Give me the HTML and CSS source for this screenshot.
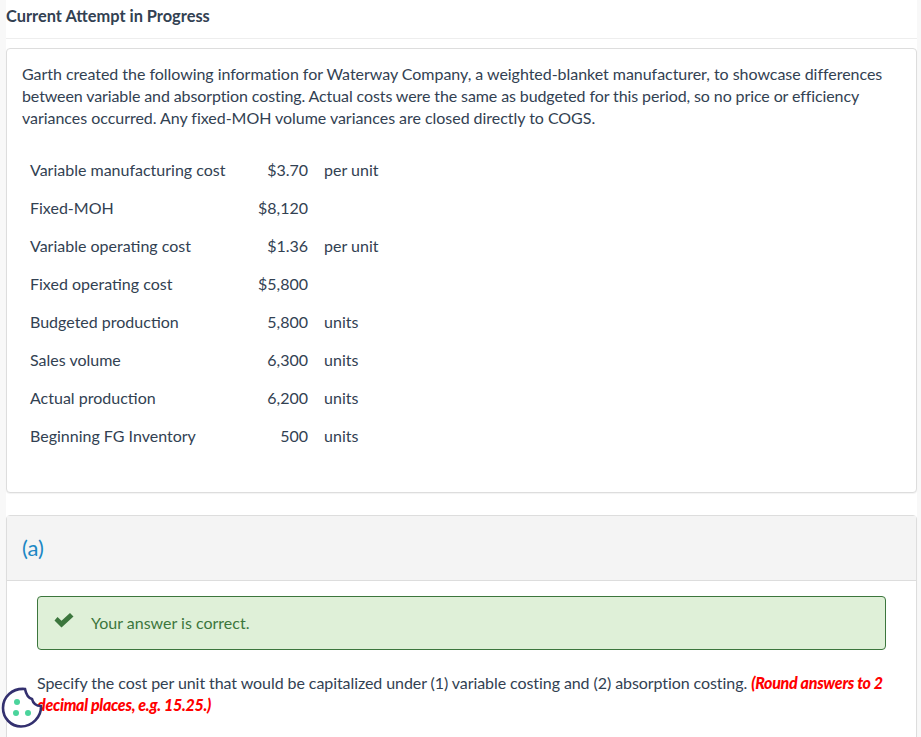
FILE: index.html
```html
<!DOCTYPE html>
<html lang="en">
<head>
<meta charset="utf-8">
<title>Current Attempt in Progress</title>
<link rel="stylesheet" href="styles.css">
</head>
<body>
<main class="page">
  <h1 class="title">Current Attempt in Progress</h1>
  <section class="card intro">
    <p class="lead">Garth created the following information for Waterway Company, a weighted-blanket manufacturer, to showcase differences <span class="tight">between variable and absorption costing. Actual costs were the same as budgeted for this period, so no price or efficiency</span> variances occurred. Any fixed-MOH volume variances are closed directly to COGS.</p>
    <table class="data">
      <tbody>
        <tr><td class="label">Variable manufacturing cost</td><td class="value">$3.70</td><td class="unit">per unit</td></tr>
        <tr><td class="label">Fixed-MOH</td><td class="value">$8,120</td><td class="unit"></td></tr>
        <tr><td class="label">Variable operating cost</td><td class="value">$1.36</td><td class="unit">per unit</td></tr>
        <tr><td class="label">Fixed operating cost</td><td class="value">$5,800</td><td class="unit"></td></tr>
        <tr><td class="label">Budgeted production</td><td class="value">5,800</td><td class="unit">units</td></tr>
        <tr><td class="label">Sales volume</td><td class="value">6,300</td><td class="unit">units</td></tr>
        <tr><td class="label">Actual production</td><td class="value">6,200</td><td class="unit">units</td></tr>
        <tr><td class="label">Beginning FG Inventory</td><td class="value">500</td><td class="unit">units</td></tr>
      </tbody>
    </table>
  </section>
  <section class="card part">
    <header class="part-head">(a)</header>
    <div class="part-body">
      <div class="notice">
        <svg class="check" viewBox="0 0 20 16" width="20" height="16" aria-hidden="true"><path d="M.5 8.500 3.500 5l4 3.800L16 1l3.500 3.500L7.500 15.500z"/></svg>
        <span class="notice-text">Your answer is correct.</span>
      </div>
      <p class="question">Specify the cost per unit that would be capitalized under (1) variable costing and (2) absorption costing. <strong class="hint">(Round answers to 2 decimal places, e.g. 15.25.)</strong></p>
    </div>
  </section>
</main>
<button class="cookie" type="button" aria-label="Cookie settings">
  <svg viewBox="0 0 42 42" width="42" height="42" aria-hidden="true">
    <path class="cookie-shape" d="M24 3C25 8 27 12 31 13 32 17 35 20 40 20 40.500 31 31 40.500 20 40.500 10 40.500 2 32 2 22 2 11 11 2 24 3z"/>
    <circle class="dot" cx="16" cy="16" r="3"/>
    <circle class="dot" cx="15" cy="27" r="3"/>
    <circle class="dot" cx="27" cy="27" r="3"/>
  </svg>
</button>
</body>
</html>
```
FILE: styles.css
```css
html, body {
  margin: 0;
  padding: 0;
  height: 737px;
  overflow: hidden;
  background: #f8f8f8;
}
body {
  font-family: Lato, "Liberation Sans", sans-serif;
  font-size: 16px;
  line-height: 22px;
  color: #324152;
}
.page {
  margin: 0 4px 0 6px;
  height: 737px;
  background: #fff;
}
.title {
  margin: 0;
  padding: 5px 0 12px;
  font-size: 16.4px;
  line-height: 21px;
  font-weight: 700;
  border-bottom: 1px solid #eee;
}
.card {
  border: 1px solid #ddd;
  border-radius: 4px;
  box-shadow: 0 1px 1px rgba(0,0,0,.05);
  background: #fff;
}
.intro {
  margin-top: 9px;
  height: 445px;
  padding: 14px 15px 0;
  box-sizing: border-box;
}
.lead {
  margin: 0;
  letter-spacing: -.035px;
}
.tight { letter-spacing: -.105px; }
.data {
  margin-top: 22px;
  border-collapse: collapse;
}
.data td {
  padding: 0;
  height: 38px;
}
.label { padding-left: 8px !important; width: 236px; box-sizing: border-box; }
.value { text-align: right; width: 50px; }
.unit { padding-left: 16px !important; }
.part {
  margin-top: 22px;
  height: 260px;
}
.part-head {
  height: 65px;
  padding: 21px 15px 0;
  box-sizing: border-box;
  background: #f4f4f4;
  border-bottom: 1px solid #ddd;
  color: #1b87c4;
  font-size: 22px;
}
.part-body { padding: 15px 30px 0; }
.notice {
  display: flex;
  align-items: center;
  gap: 16px;
  height: 54px;
  box-sizing: border-box;
  padding: 0 16px;
  background: #dff0d8;
  border: 1px solid #3c763d;
  border-radius: 4px;
  color: #3c763d;
}
.notice-text { margin-left: 1px; }
.check { fill: #3c763d; margin-top: -6px; }
.question {
  margin: 22px 0 0;
  letter-spacing: -.075px;
}
.hint {
  color: #f00;
  font-style: italic;
  font-weight: 900;
  letter-spacing: -.29px;
}
.cookie {
  position: absolute;
  left: 1px;
  top: 686px;
  padding: 0;
  border: 0;
  background: transparent;
  line-height: 0;
}
.cookie-shape { fill: #fff; stroke: #33306f; stroke-width: 2.6; }
.dot { fill: #4bd49c; }
```
